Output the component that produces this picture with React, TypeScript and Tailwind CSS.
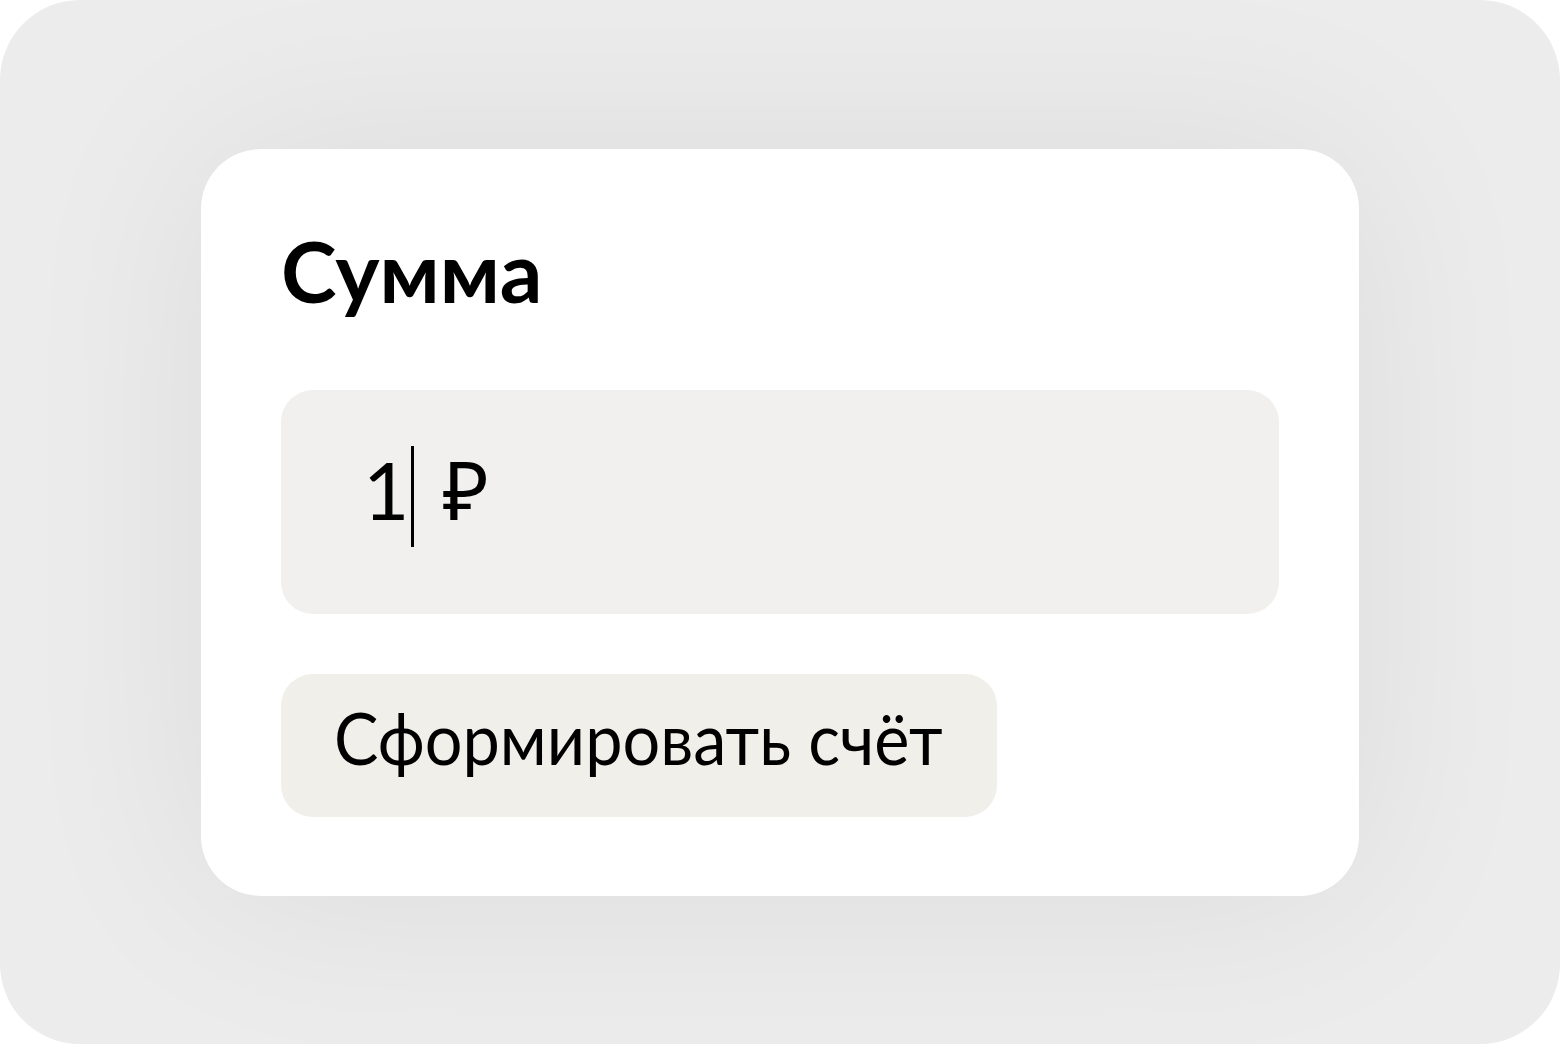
import React from "react";

export default function App() {
  return (
    <div className="w-[1560px] h-[1044px] bg-white" style={{ fontFamily: "Lato, 'Noto Sans', sans-serif" }}>
      <div className="w-full h-full rounded-[80px] bg-[#ececec] flex items-center justify-center">
        <div className="w-[1158px] h-[747px] bg-white rounded-[60px] px-[80px] pt-[80px] shadow-[0_0_200px_rgba(20,25,35,0.07)] flex flex-col">
          <h1 className="text-[84px] leading-[84px] font-bold text-black">Сумма</h1>
          <div className="mt-[77px] h-[224px] rounded-[32px] bg-[#f1f0ee] flex items-start pl-[82px] pt-[56px]">
            <span className="mt-[3px] text-[80px] leading-none text-black">1</span>
            <span className="ml-[2px] w-[3px] h-[101px] bg-black"></span>
            <span className="mt-[3px] ml-[28px] text-[80px] leading-none text-black">₽</span>
          </div>
          <div className="mt-[60px] self-start h-[143px] w-[716px] rounded-[32px] bg-[#f1efe9] flex items-start pl-[53px] pt-[27px]">
            <span className="inline-block origin-left scale-x-[0.925] whitespace-nowrap text-[72px] leading-none text-black">Сформировать счёт</span>
          </div>
        </div>
      </div>
    </div>
  );
}
